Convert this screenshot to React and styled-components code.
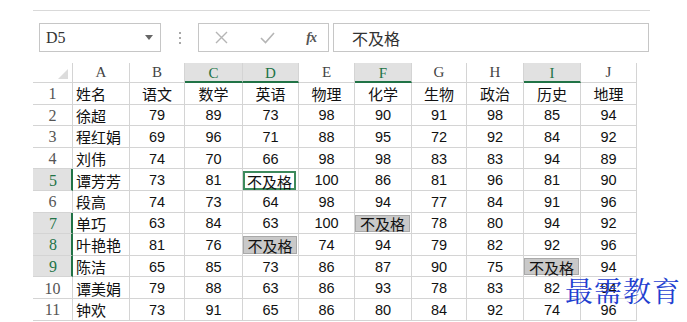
import React from "react";
import styled, { createGlobalStyle, css } from "styled-components";

const Global = createGlobalStyle`
  html, body { margin: 0; padding: 0; background: #fff; }
  body { font-family: "Liberation Sans", "Noto Sans CJK SC", sans-serif; }
`;

const Page = styled.div`
  position: relative;
  width: 687px;
  height: 322px;
  overflow: hidden;
  padding-left: 33px;
  box-sizing: border-box;
`;

const TopRule = styled.div`
  margin-top: 10px;
  width: 617px;
  border-top: 1px solid #d9d9d9;
`;

const FormulaBar = styled.div`
  display: flex;
  align-items: center;
  margin-top: 12px;
  margin-left: 6px;
  height: 29px;
`;

const NameBox = styled.div`
  box-sizing: border-box;
  width: 122px;
  height: 29px;
  border: 1px solid #c6c6c6;
  display: flex;
  align-items: center;
  justify-content: space-between;
  padding: 0 7px 0 6px;
  font-family: "Liberation Serif", serif;
  font-size: 16px;
  color: #333;
`;

const Dots = styled.div`
  width: 37px;
  display: flex;
  flex-direction: column;
  align-items: center;
  gap: 3px;
  span {
    width: 2px;
    height: 2px;
    background: #a8a8a8;
  }
`;

const FxBox = styled.div`
  box-sizing: border-box;
  width: 131px;
  height: 29px;
  border: 1px solid #c6c6c6;
  display: flex;
  align-items: center;
  padding: 0 12px 0 16px;
  justify-content: space-between;
`;

const FxText = styled.span`
  font-family: "Liberation Serif", serif;
  font-style: italic;
  font-weight: bold;
  font-size: 14px;
  color: #555;
  letter-spacing: -1px;
`;

const FormulaInput = styled.div`
  box-sizing: border-box;
  margin-left: 4px;
  width: 316px;
  height: 29px;
  border: 1px solid #c6c6c6;
  display: flex;
  align-items: center;
  padding-left: 18px;
  font-family: "Noto Sans CJK SC", sans-serif;
  font-size: 16px;
  color: #333;
`;

const widths = [57, 55, 58, 56, 56, 57, 55, 57, 57, 56];

const Grid = styled.div`
  margin-top: 11px;
  display: grid;
  grid-template-columns: 40px ${widths.map((w) => w + "px").join(" ")};
  grid-template-rows: 20px repeat(11, 21.6px);
`;

const Corner = styled.div`
  box-sizing: border-box;
  border-right: 1px solid #d4d4d4;
  border-bottom: 1px solid #d4d4d4;
  display: flex;
  align-items: flex-end;
  justify-content: flex-end;
  padding: 0 4px 3px 0;
  svg { display: block; }
`;

const ColHead = styled.div`
  box-sizing: border-box;
  border-right: 1px solid #d4d4d4;
  display: flex;
  align-items: center;
  justify-content: center;
  font-family: "Liberation Serif", serif;
  font-size: 15px;
  color: #444;
  ${(p) =>
    p.$sel
      ? css`
          background: #e1e1e1;
          color: #217346;
          border-bottom: 2px solid #217346;
          padding-top: 2px;
        `
      : css`
          border-bottom: 1px solid #d4d4d4;
        `}
`;

const RowHead = styled.div`
  box-sizing: border-box;
  border-bottom: 1px solid #d4d4d4;
  display: flex;
  align-items: center;
  justify-content: center;
  padding-top: 2px;
  font-family: "Liberation Serif", serif;
  font-size: 16px;
  color: #555;
  ${(p) =>
    p.$sel
      ? css`
          background: #e1e1e1;
          color: #217346;
          border-right: 2px solid #217346;
          padding-left: 2px;
        `
      : css`
          border-right: 1px solid #d4d4d4;
        `}
`;

const Cell = styled.div`
  box-sizing: border-box;
  border-right: 1px solid #d4d4d4;
  border-bottom: 1px solid #d4d4d4;
  display: flex;
  align-items: stretch;
  justify-content: ${(p) => (p.$left ? "flex-start" : "center")};
  padding: ${(p) => (p.$mark ? "1px 1px 0 0" : "0")};
  min-width: 0;
`;

const CellText = styled.span`
  flex: ${(p) => (p.$mark ? "1" : "0 0 auto")};
  box-sizing: border-box;
  display: flex;
  align-items: center;
  justify-content: ${(p) => (p.$left ? "flex-start" : "center")};
  padding-left: ${(p) => (p.$left ? "3px" : "0")};
  padding-top: 1px;
  font-family: ${(p) =>
    p.$num ? `"Liberation Sans", sans-serif` : `"Noto Sans CJK SC", sans-serif`};
  font-size: ${(p) => (p.$num ? "14.5px" : "15px")};
  color: #111;
  white-space: nowrap;
  ${(p) =>
    p.$mark === "sel" &&
    css`
      border: 2px solid #3d8a5c;
      background: #fff;
      margin: 1px 1px 0 0;
    `}
  ${(p) =>
    p.$mark === "gray" &&
    css`
      border: 1px solid #a9a9a9;
      background: #c9c9c9;
      margin: 1px 0 1px 0;
    `}
`;

const Watermark = styled.div`
  position: absolute;
  left: 565px;
  top: 272px;
  font-family: "Noto Serif CJK SC", "Noto Sans CJK SC", serif;
  font-size: 28px;
  letter-spacing: 1px;
  color: #1f3fd0;
  line-height: 36px;
`;

const cols = ["A", "B", "C", "D", "E", "F", "G", "H", "I", "J"];
const selCols = new Set(["C", "D", "F", "I"]);
const selRows = new Set([5, 7, 8, 9]);

const F = "不及格";
const data = [
  ["姓名", "语文", "数学", "英语", "物理", "化学", "生物", "政治", "历史", "地理"],
  ["徐超", 79, 89, 73, 98, 90, 91, 98, 85, 94],
  ["程红娟", 69, 96, 71, 88, 95, 72, 92, 84, 92],
  ["刘伟", 74, 70, 66, 98, 98, 83, 83, 94, 89],
  ["谭芳芳", 73, 81, F, 100, 86, 81, 96, 81, 90],
  ["段高", 74, 73, 64, 98, 94, 77, 84, 91, 96],
  ["单巧", 63, 84, 63, 100, F, 78, 80, 94, 92],
  ["叶艳艳", 81, 76, F, 74, 94, 79, 82, 92, 96],
  ["陈洁", 65, 85, 73, 86, 87, 90, 75, F, 94],
  ["谭美娟", 79, 88, 63, 86, 93, 78, 83, 82, 94],
  ["钟欢", 73, 91, 65, 86, 80, 84, 92, 74, 96],
];

export default function App() {
  return (
    <>
      <Global />
      <Page>
        <TopRule />
        <FormulaBar>
          <NameBox>
            <span>D5</span>
            <svg width="8" height="5" viewBox="0 0 8 5">
              <path d="M0 0h8L4 5z" fill="#666" />
            </svg>
          </NameBox>
          <Dots>
            <span />
            <span />
            <span />
          </Dots>
          <FxBox>
            <svg width="13" height="13" viewBox="0 0 13 13">
              <path d="M1 1l11 11M12 1L1 12" stroke="#b5b5b5" strokeWidth="1.4" fill="none" />
            </svg>
            <svg width="15" height="12" viewBox="0 0 15 12">
              <path d="M1 6l4.5 4.5L14 1" stroke="#b5b5b5" strokeWidth="1.6" fill="none" />
            </svg>
            <FxText>fx</FxText>
          </FxBox>
          <FormulaInput>不及格</FormulaInput>
        </FormulaBar>
        <Grid>
          <Corner>
            <svg width="10" height="10" viewBox="0 0 10 10">
              <path d="M10 0v10H0z" fill="#dcdcdc" />
            </svg>
          </Corner>
          {cols.map((c) => (
            <ColHead key={c} $sel={selCols.has(c)}>
              {c}
            </ColHead>
          ))}
          {data.map((row, ri) => {
            const r = ri + 1;
            return (
              <React.Fragment key={r}>
                <RowHead $sel={selRows.has(r)}>{r}</RowHead>
                {row.map((v, ci) => {
                  const isSel = r === 5 && ci === 3;
                  const mark = v === F ? (isSel ? "sel" : "gray") : undefined;
                  return (
                    <Cell key={ci} $left={ci === 0} $mark={mark}>
                      <CellText $left={ci === 0} $mark={mark} $num={typeof v === "number"}>
                        {v}
                      </CellText>
                    </Cell>
                  );
                })}
              </React.Fragment>
            );
          })}
        </Grid>
        <Watermark>最需教育</Watermark>
      </Page>
    </>
  );
}
